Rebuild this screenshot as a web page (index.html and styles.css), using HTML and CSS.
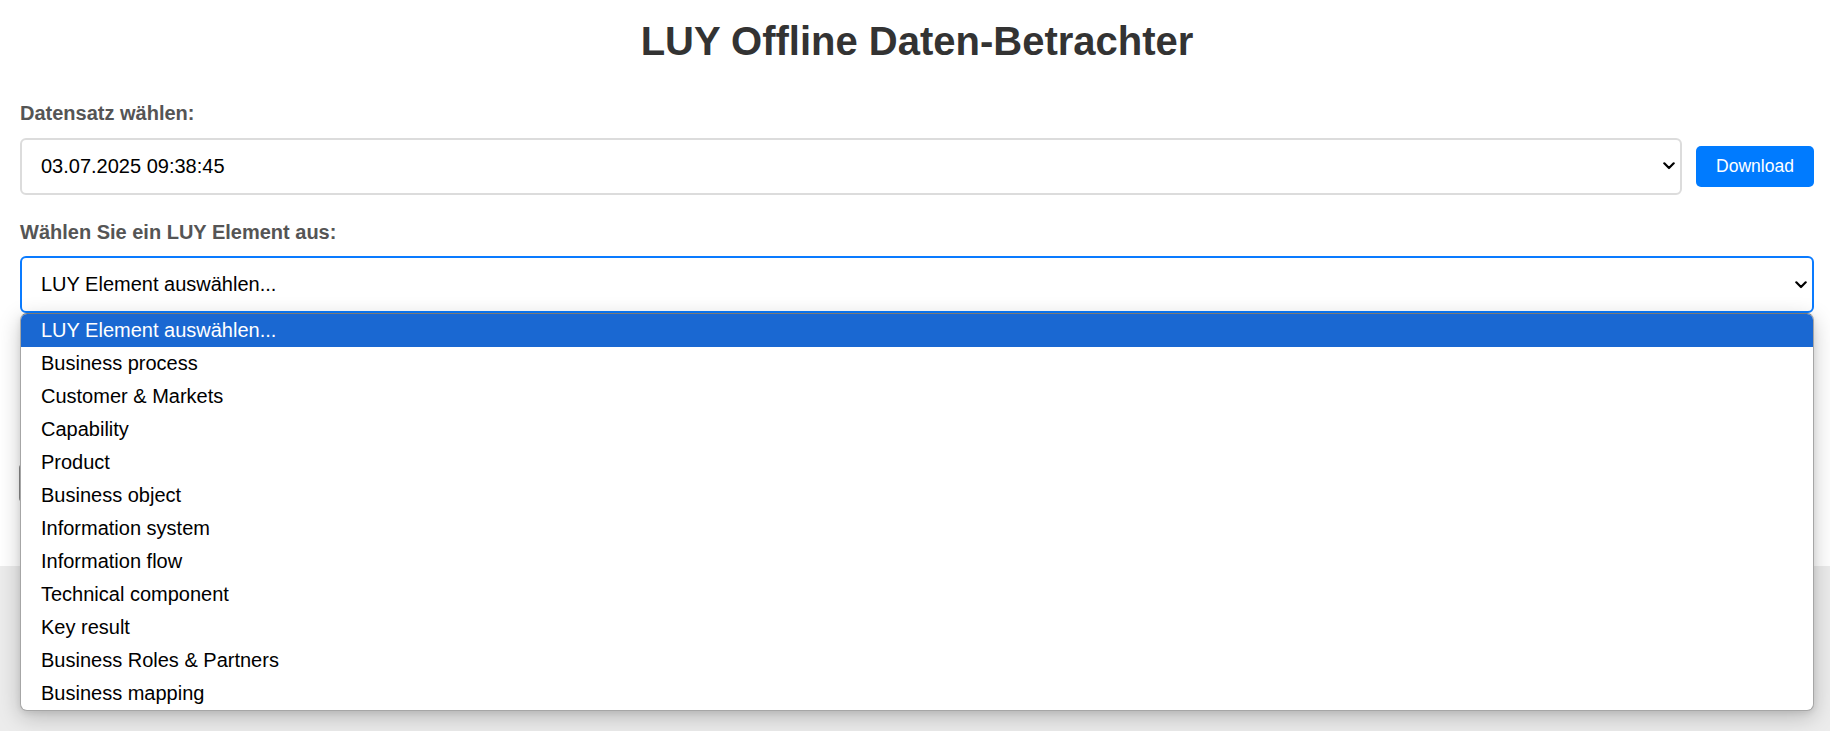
FILE: index.html
```html
<!DOCTYPE html>
<html lang="de">
<head>
<meta charset="utf-8">
<title>LUY Offline Daten-Betrachter</title>
<link rel="stylesheet" href="styles.css">
</head>
<body>
<div class="page">
  <h1 class="title">LUY Offline Daten-Betrachter</h1>

  <div class="group">
    <label class="label">Datensatz wählen:</label>
    <div class="row">
      <div class="select-box">
        <span class="select-text">03.07.2025 09:38:45</span>
        <svg class="chevron" width="12" height="8" viewBox="0 0 12 8"><polyline points="1.3,1.3 6,6 10.7,1.3" fill="none" stroke="#000" stroke-width="2.2" stroke-linecap="round" stroke-linejoin="round"/></svg>
      </div>
      <button class="btn">Download</button>
    </div>
  </div>

  <div class="group group-second">
    <label class="label">Wählen Sie ein LUY Element aus:</label>
    <div class="select-wrap">
      <div class="select-box select-focus">
        <span class="select-text">LUY Element auswählen...</span>
        <svg class="chevron" width="12" height="8" viewBox="0 0 12 8"><polyline points="1.3,1.3 6,6 10.7,1.3" fill="none" stroke="#000" stroke-width="2.2" stroke-linecap="round" stroke-linejoin="round"/></svg>
      </div>
      <ul class="dropdown">
        <li class="option option-active">LUY Element auswählen...</li>
        <li class="option">Business process</li>
        <li class="option">Customer &amp; Markets</li>
        <li class="option">Capability</li>
        <li class="option">Product</li>
        <li class="option">Business object</li>
        <li class="option">Information system</li>
        <li class="option">Information flow</li>
        <li class="option">Technical component</li>
        <li class="option">Key result</li>
        <li class="option">Business Roles &amp; Partners</li>
        <li class="option">Business mapping</li>
      </ul>
    </div>
  </div>

  <div class="hidden-box"></div>
</div>
</body>
</html>
```

FILE: styles.css
```css
html, body {
  margin: 0;
  padding: 0;
}

html {
  background: #ececec;
}

body {
  min-height: 100vh;
  background: #ececec;
  font-family: "Liberation Sans", Arial, sans-serif;
  color: #000;
}

.page {
  position: relative;
  background: #ffffff;
  padding: 18px 16px 64px 20px;
}

.title {
  margin: 0 0 38px;
  font-size: 40px;
  line-height: 46px;
  font-weight: bold;
  color: #333333;
  text-align: center;
}

.group {
  display: flex;
  flex-direction: column;
}

.group-second {
  margin-top: 26px;
}

.label {
  display: block;
  font-size: 20px;
  line-height: 23px;
  font-weight: bold;
  color: #555555;
  margin-bottom: 12.5px;
}

.row {
  display: flex;
  align-items: center;
  gap: 14px;
}

.row .select-box {
  flex: 1;
}

.select-box {
  box-sizing: border-box;
  height: 57px;
  display: flex;
  align-items: center;
  justify-content: space-between;
  border: 2px solid #dcdcdc;
  border-radius: 6px;
  padding: 0 5px 0 19px;
  background: #fff;
  font-size: 20px;
}

.select-focus {
  border-color: #0a7bff;
}

.select-text {
  color: #000;
}

.chevron {
  display: block;
}

.btn {
  box-sizing: border-box;
  height: 41px;
  width: 118px;
  padding: 0;
  border: none;
  border-radius: 5px;
  background: #007bff;
  color: #fff;
  font-family: "Liberation Sans", Arial, sans-serif;
  font-size: 17.5px;
}

.select-wrap {
  position: relative;
  z-index: 5;
}

.dropdown {
  position: absolute;
  top: 100%;
  left: 0;
  right: 0;
  z-index: 10;
  margin: 0;
  padding: 0;
  list-style: none;
  background: #fff;
  border: 1px solid #a6a6a6;
  border-top-color: #7a7a7a;
  border-radius: 7px;
  overflow: hidden;
  box-shadow: 0 6px 22px rgba(0, 0, 0, 0.22), 0 2px 6px rgba(0, 0, 0, 0.08);
}

.option {
  height: 33px;
  line-height: 33px;
  padding-left: 20px;
  font-size: 20px;
  color: #000;
  white-space: nowrap;
}

.option-active {
  background: #1a68d2;
  color: #fff;
}

.hidden-box {
  box-sizing: border-box;
  margin-top: 151px;
  margin-left: -1px;
  height: 38px;
  border: 2px solid #8a8a8a;
  border-radius: 4px;
  background: #fff;
}
```
